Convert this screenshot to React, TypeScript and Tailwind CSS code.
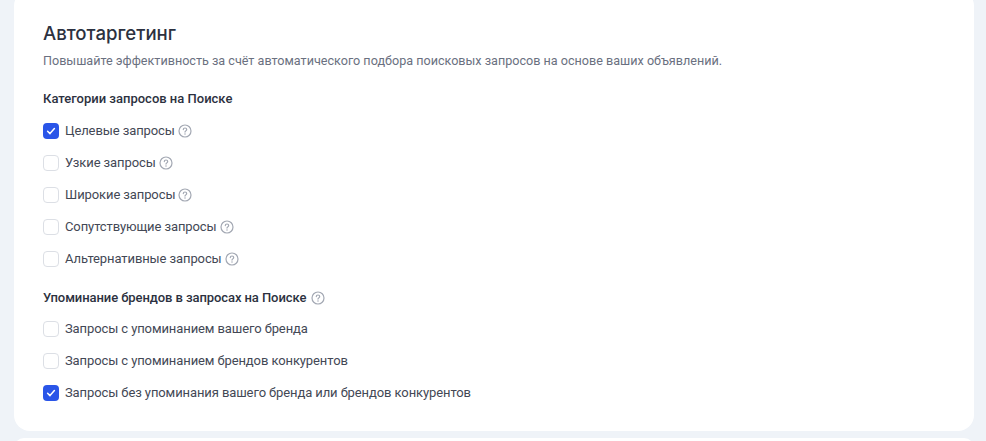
import React from "react";

function Help() {
  return (
    <svg width="14" height="14" viewBox="0 0 14 14" fill="none" className="shrink-0">
      <circle cx="7" cy="7" r="6" stroke="#a3a8b3" strokeWidth="1.2" />
      <path d="M5.3 5.6C5.3 4.6 6.05 4 7 4s1.7.6 1.7 1.5c0 1.3-1.7 1.4-1.7 2.6" stroke="#a3a8b3" strokeWidth="1.2" strokeLinecap="round" />
      <circle cx="7" cy="10" r=".75" fill="#a3a8b3" />
    </svg>
  );
}

function Row({ label, checked, help }: { label: string; checked?: boolean; help?: boolean }) {
  return (
    <div className="flex h-[32px] items-center">
      {checked ? (
        <span className="flex h-4 w-4 items-center justify-center rounded-[4px] bg-[#2a55e8]">
          <svg width="12" height="12" viewBox="0 0 12 12" fill="none">
            <path d="M2.6 6.2l2.4 2.4 4.4-5" stroke="#fff" strokeWidth="1.5" strokeLinecap="round" strokeLinejoin="round" />
          </svg>
        </span>
      ) : (
        <span className="h-4 w-4 rounded-[4px] border border-[#dcdfe5] bg-white" />
      )}
      <span className="ml-[6px] text-[13px] leading-[16px] tracking-[-0.1px] text-[#434855]">{label}</span>
      {help && <span className="ml-[3px]"><Help /></span>}
    </div>
  );
}

export default function App() {
  return (
    <div className="h-[441px] overflow-hidden bg-[#eff3f8] pl-[14px] pr-[12px] font-['Roboto',sans-serif]">
      <div className="-mt-[10px] flex h-[441px] flex-col rounded-[16px] bg-white pl-[29px] pt-[30px]">
        <h1 className="font-['Inter',sans-serif] text-[18.6px] font-medium leading-[26px] text-[#2c3140]">Автотаргетинг</h1>
        <p className="mt-[7px] text-[12.6px] leading-[16px] text-[#6a7080]">
          Повышайте эффективность за счёт автоматического подбора поисковых запросов на основе ваших объявлений.
        </p>
        <h2 className="mt-[21px] text-[13px] font-medium leading-[18px] text-[#2c3140]">Категории запросов на Поиске</h2>
        <div className="mt-[7px] flex flex-col">
          <Row label="Целевые запросы" checked help />
          <Row label="Узкие запросы" help />
          <Row label="Широкие запросы" help />
          <Row label="Сопутствующие запросы" help />
          <Row label="Альтернативные запросы" help />
        </div>
        <h2 className="mt-[14px] flex items-center gap-[5px] text-[13px] font-medium leading-[18px] tracking-[-0.08px] text-[#2c3140]">
          Упоминание брендов в запросах на Поиске <Help />
        </h2>
        <div className="mt-[6px] flex flex-col">
          <Row label="Запросы с упоминанием вашего бренда" />
          <Row label="Запросы с упоминанием брендов конкурентов" />
          <Row label="Запросы без упоминания вашего бренда или брендов конкурентов" checked />
        </div>
      </div>
      <div className="mt-[7px] h-[20px] rounded-[16px] bg-white" />
    </div>
  );
}
